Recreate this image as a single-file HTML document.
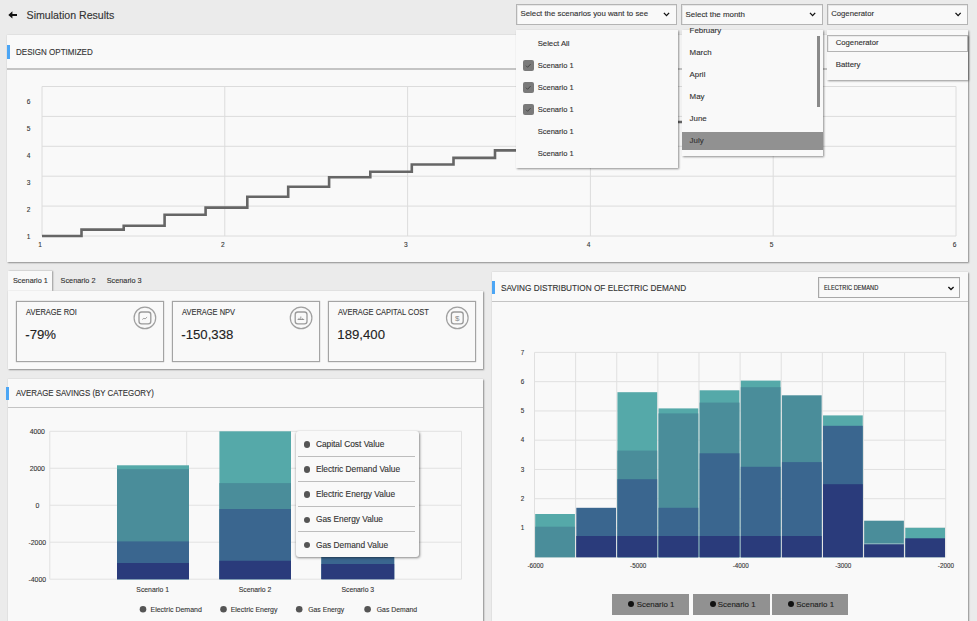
<!DOCTYPE html><html><head><meta charset="utf-8"><style>
*{margin:0;padding:0;box-sizing:border-box}
html,body{width:977px;height:621px;overflow:hidden;background:#ebebeb;font-family:"Liberation Sans",sans-serif;color:#333}
.t{position:absolute;white-space:nowrap;-webkit-text-stroke:0.12px currentColor}
svg text{stroke:currentColor;stroke-width:0.1px}
.card{position:absolute;background:#f9f9f9;box-shadow:1px 1px 1.5px rgba(0,0,0,.38)}
svg{position:absolute;left:0;top:0}
</style></head><body>
<svg width="977" height="621" font-family="Liberation Sans" style="z-index:1"><path d="M8.3 14.9 L12.4 11.2 L12.4 13.9 H17 V15.9 H12.4 V18.6 Z" fill="#111"/></svg>
<div class="t" style="left:26.6px;top:7.0px;font-size:10.6px;line-height:16px;color:#333;">Simulation Results</div>
<div style="position:absolute;left:7px;top:35px;width:961px;height:227px;background:#f9f9f9;box-shadow:1px 1px 1.5px rgba(0,0,0,.38),0 0 1.5px rgba(0,0,0,.12)"></div>
<div style="position:absolute;left:7px;top:45px;width:3px;height:13.600000000000001px;background:#4ca6f5"></div>
<div class="t" style="left:16.3px;top:45.0px;font-size:8.6px;line-height:14px;color:#333;transform:scaleX(0.9346);transform-origin:0 50%;">DESIGN OPTIMIZED</div>
<div style="position:absolute;left:7px;top:68px;width:961px;height:1.5px;background:#c4c4c4"></div>
<div style="position:absolute;left:8px;top:271.2px;width:44px;height:19.80000000000001px;background:#f9f9f9;box-shadow:1px 0 1.5px rgba(0,0,0,.35)"></div>
<div class="t" style="left:13.0px;top:275.2px;font-size:7.3px;line-height:12px;color:#333;">Scenario 1</div>
<div class="t" style="left:60.6px;top:275.2px;font-size:7.3px;line-height:12px;color:#333;">Scenario 2</div>
<div class="t" style="left:106.7px;top:275.2px;font-size:7.3px;line-height:12px;color:#333;">Scenario 3</div>
<div style="position:absolute;left:7.5px;top:291px;width:475.5px;height:78.19999999999999px;background:#f9f9f9;box-shadow:1px 1px 1.5px rgba(0,0,0,.38),0 0 1.5px rgba(0,0,0,.12)"></div>
<div style="position:absolute;left:16px;top:301.3px;width:147.7px;height:60.39999999999998px;border:1px solid #a4a4a4;box-shadow:0 0 1px rgba(0,0,0,.35)"></div>
<div class="t" style="left:25.5px;top:305.8px;font-size:8.5px;line-height:13px;color:#333;transform:scaleX(0.8788);transform-origin:0 50%;">AVERAGE ROI</div>
<div class="t" style="left:25.3px;top:325.0px;font-size:13.2px;line-height:20px;color:#222;">-79%</div>
<div style="position:absolute;left:172px;top:301.3px;width:147.7px;height:60.39999999999998px;border:1px solid #a4a4a4;box-shadow:0 0 1px rgba(0,0,0,.35)"></div>
<div class="t" style="left:181.5px;top:305.8px;font-size:8.5px;line-height:13px;color:#333;transform:scaleX(0.8788);transform-origin:0 50%;">AVERAGE NPV</div>
<div class="t" style="left:181.3px;top:325.0px;font-size:13.2px;line-height:20px;color:#222;">-150,338</div>
<div style="position:absolute;left:328px;top:301.3px;width:147.7px;height:60.39999999999998px;border:1px solid #a4a4a4;box-shadow:0 0 1px rgba(0,0,0,.35)"></div>
<div class="t" style="left:337.5px;top:305.8px;font-size:8.5px;line-height:13px;color:#333;transform:scaleX(0.8788);transform-origin:0 50%;">AVERAGE CAPITAL COST</div>
<div class="t" style="left:337.3px;top:325.0px;font-size:13.2px;line-height:20px;color:#222;">189,400</div>
<div style="position:absolute;left:8px;top:379px;width:475px;height:261px;background:#f9f9f9;box-shadow:1px 1px 1.5px rgba(0,0,0,.38),0 0 1.5px rgba(0,0,0,.12)"></div>
<div style="position:absolute;left:6px;top:387px;width:3px;height:13px;background:#4ca6f5"></div>
<div class="t" style="left:16.4px;top:386.3px;font-size:8.6px;line-height:14px;color:#333;transform:scaleX(0.9179);transform-origin:0 50%;">AVERAGE SAVINGS (BY CATEGORY)</div>
<div style="position:absolute;left:8px;top:406.5px;width:475px;height:1.5px;background:#c4c4c4"></div>
<div style="position:absolute;left:492px;top:271.5px;width:476px;height:368.5px;background:#f9f9f9;box-shadow:1px 1px 1.5px rgba(0,0,0,.38),0 0 1.5px rgba(0,0,0,.12)"></div>
<div style="position:absolute;left:492px;top:281px;width:3px;height:13px;background:#4ca6f5"></div>
<div class="t" style="left:501.2px;top:281.0px;font-size:8.6px;line-height:14px;color:#333;transform:scaleX(0.9559);transform-origin:0 50%;">SAVING DISTRIBUTION OF ELECTRIC DEMAND</div>
<div style="position:absolute;left:492px;top:300.8px;width:476px;height:1.3999999999999773px;background:#c4c4c4"></div>
<div style="position:absolute;left:818px;top:277.3px;width:142px;height:21.19999999999999px;border:1px solid #a8a8a8;background:#f9f9f9;box-shadow:inset 1px 1px 0 rgba(0,0,0,.06)"></div>
<div class="t" style="left:823.6px;top:283.2px;font-size:6.4px;line-height:10px;color:#222;transform:scaleX(0.8880);transform-origin:0 50%;">ELECTRIC DEMAND</div>
<svg width="977" height="621" font-family="Liberation Sans" style="z-index:1"><path d="M948.4 286.9 l2.6 2.6 l2.6 -2.6" stroke="#111" stroke-width="1.35" fill="none"/></svg>
<svg width="977" height="621" font-family="Liberation Sans" style="z-index:2"><circle cx="144.9" cy="317.9" r="10.8" fill="none" stroke="#a0a0a0" stroke-width="1.2"/><rect x="139.0" y="312.0" width="11.8" height="11.8" rx="2.6" fill="none" stroke="#9a9a9a" stroke-width="1.3"/><circle cx="301.1" cy="317.9" r="10.8" fill="none" stroke="#a0a0a0" stroke-width="1.2"/><rect x="295.20000000000005" y="312.0" width="11.8" height="11.8" rx="2.6" fill="none" stroke="#9a9a9a" stroke-width="1.3"/><circle cx="457.29999999999995" cy="317.9" r="10.8" fill="none" stroke="#a0a0a0" stroke-width="1.2"/><rect x="451.4" y="312.0" width="11.8" height="11.8" rx="2.6" fill="none" stroke="#9a9a9a" stroke-width="1.3"/><path d="M142.3 319.5 l1.6 -1.2 l1.2 0.6 l2 -1.8" stroke="#777" stroke-width="0.7" fill="none"/><path d="M297.6 319.5 h6.6 M299 319.5 v-1.6 M300.8 319.5 v-3 M302.6 319.5 v-1.2" stroke="#777" stroke-width="0.7" fill="none"/><text x="457.3" y="320.8" font-size="8" text-anchor="middle" fill="#8a8a8a" style="stroke:none" font-family="Liberation Sans">$</text><line x1="42" y1="86.5" x2="956" y2="86.5" stroke="#dcdcdc" stroke-width="1"/><line x1="42" y1="116.4" x2="956" y2="116.4" stroke="#dcdcdc" stroke-width="1"/><line x1="42" y1="146.3" x2="956" y2="146.3" stroke="#dcdcdc" stroke-width="1"/><line x1="42" y1="176.2" x2="956" y2="176.2" stroke="#dcdcdc" stroke-width="1"/><line x1="42" y1="206.1" x2="956" y2="206.1" stroke="#dcdcdc" stroke-width="1"/><line x1="42" y1="236.0" x2="956" y2="236.0" stroke="#dcdcdc" stroke-width="1"/><line x1="42.0" y1="86.5" x2="42.0" y2="236" stroke="#dcdcdc" stroke-width="1"/><line x1="224.8" y1="86.5" x2="224.8" y2="236" stroke="#dcdcdc" stroke-width="1"/><line x1="407.6" y1="86.5" x2="407.6" y2="236" stroke="#dcdcdc" stroke-width="1"/><line x1="590.4000000000001" y1="86.5" x2="590.4000000000001" y2="236" stroke="#dcdcdc" stroke-width="1"/><line x1="773.2" y1="86.5" x2="773.2" y2="236" stroke="#dcdcdc" stroke-width="1"/><line x1="956.0" y1="86.5" x2="956.0" y2="236" stroke="#dcdcdc" stroke-width="1"/><text x="28.5" y="104.2" font-size="6.6" text-anchor="middle" fill="#333">6</text><text x="28.5" y="131.10000000000002" font-size="6.6" text-anchor="middle" fill="#333">5</text><text x="28.5" y="158.0" font-size="6.6" text-anchor="middle" fill="#333">4</text><text x="28.5" y="184.9" font-size="6.6" text-anchor="middle" fill="#333">3</text><text x="28.5" y="211.8" font-size="6.6" text-anchor="middle" fill="#333">2</text><text x="28.5" y="238.70000000000002" font-size="6.6" text-anchor="middle" fill="#333">1</text><text x="40.0" y="246.8" font-size="6.6" text-anchor="middle" fill="#333">1</text><text x="222.9" y="246.8" font-size="6.6" text-anchor="middle" fill="#333">2</text><text x="405.8" y="246.8" font-size="6.6" text-anchor="middle" fill="#333">3</text><text x="588.7" y="246.8" font-size="6.6" text-anchor="middle" fill="#333">4</text><text x="771.6" y="246.8" font-size="6.6" text-anchor="middle" fill="#333">5</text><text x="954.5" y="246.8" font-size="6.6" text-anchor="middle" fill="#333">6</text><path d="M42 236 H81.5 V229.6 H123.7 V225.7 H164.6 V214.7 H205.6 V207.6 H247.3 V196.8 H288.2 V186.8 H329.1 V177.3 H370.3 V171.7 H411.8 V164.5 H453.5 V157.9 H495 V150.4 H536.5 V143 H578 V136 H619.5 V129 H661 V122 H702" stroke="#666" stroke-width="2.6" fill="none"/><line x1="49.8" y1="431.3" x2="461.5" y2="431.3" stroke="#e2e2e2" stroke-width="1"/><line x1="49.8" y1="468.27500000000003" x2="461.5" y2="468.27500000000003" stroke="#e2e2e2" stroke-width="1"/><line x1="49.8" y1="505.25" x2="461.5" y2="505.25" stroke="#e2e2e2" stroke-width="1"/><line x1="49.8" y1="542.225" x2="461.5" y2="542.225" stroke="#e2e2e2" stroke-width="1"/><line x1="49.8" y1="579.2" x2="461.5" y2="579.2" stroke="#e2e2e2" stroke-width="1"/><line x1="49.8" y1="431.3" x2="49.8" y2="579.2" stroke="#e2e2e2" stroke-width="1"/><line x1="186.7" y1="431.3" x2="186.7" y2="579.2" stroke="#e2e2e2" stroke-width="1"/><line x1="323.9" y1="431.3" x2="323.9" y2="579.2" stroke="#e2e2e2" stroke-width="1"/><line x1="461.5" y1="431.3" x2="461.5" y2="579.2" stroke="#e2e2e2" stroke-width="1"/><text x="37.3" y="433.6" font-size="6.9" text-anchor="middle" fill="#333">4000</text><text x="37.3" y="470.57500000000005" font-size="6.9" text-anchor="middle" fill="#333">2000</text><text x="37.3" y="507.55" font-size="6.9" text-anchor="middle" fill="#333">0</text><text x="37.3" y="544.525" font-size="6.9" text-anchor="middle" fill="#333">-2000</text><text x="37.3" y="581.5" font-size="6.9" text-anchor="middle" fill="#333">-4000</text><rect x="117" y="465.3" width="72" height="113.90000000000003" fill="#55a9a9"/><rect x="117" y="469.2" width="72" height="110.00000000000006" fill="#4a8d9a"/><rect x="117" y="541.4" width="72" height="37.80000000000007" fill="#3a668f"/><rect x="117" y="563" width="72" height="16.200000000000045" fill="#2a3b7b"/><rect x="219.4" y="431.3" width="71.6" height="147.90000000000003" fill="#55a9a9"/><rect x="219.4" y="483.1" width="71.6" height="96.10000000000002" fill="#4a8d9a"/><rect x="219.4" y="509" width="71.6" height="70.20000000000005" fill="#3a668f"/><rect x="219.4" y="560.8" width="71.6" height="18.40000000000009" fill="#2a3b7b"/><rect x="321.4" y="520" width="72.80000000000001" height="59.200000000000045" fill="#4a8d9a"/><rect x="321.4" y="540" width="72.80000000000001" height="39.200000000000045" fill="#3a668f"/><rect x="321.4" y="564" width="72.80000000000001" height="15.200000000000045" fill="#2a3b7b"/><text x="152.7" y="591.6999999999999" font-size="6.85" text-anchor="middle" fill="#333">Scenario 1</text><text x="255" y="591.6999999999999" font-size="6.85" text-anchor="middle" fill="#333">Scenario 2</text><text x="357.8" y="591.6999999999999" font-size="6.85" text-anchor="middle" fill="#333">Scenario 3</text><circle cx="143" cy="609.2" r="3.3" fill="#555"/><text x="150.5" y="612.1" font-size="7.0" fill="#333">Electric Demand</text><circle cx="223.5" cy="609.2" r="3.3" fill="#555"/><text x="230.7" y="612.1" font-size="6.96" fill="#333">Electric Energy</text><circle cx="299.2" cy="609.2" r="3.3" fill="#555"/><text x="308.3" y="612.1" font-size="6.8" fill="#333">Gas Energy</text><circle cx="367.6" cy="609.2" r="3.3" fill="#555"/><text x="376.8" y="612.1" font-size="6.85" fill="#333">Gas Demand</text><line x1="534.5" y1="352.4" x2="945.7" y2="352.4" stroke="#e0e0e0" stroke-width="1"/><line x1="534.5" y1="381.65999999999997" x2="945.7" y2="381.65999999999997" stroke="#e0e0e0" stroke-width="1"/><line x1="534.5" y1="410.91999999999996" x2="945.7" y2="410.91999999999996" stroke="#e0e0e0" stroke-width="1"/><line x1="534.5" y1="440.17999999999995" x2="945.7" y2="440.17999999999995" stroke="#e0e0e0" stroke-width="1"/><line x1="534.5" y1="469.44" x2="945.7" y2="469.44" stroke="#e0e0e0" stroke-width="1"/><line x1="534.5" y1="498.7" x2="945.7" y2="498.7" stroke="#e0e0e0" stroke-width="1"/><line x1="534.5" y1="527.96" x2="945.7" y2="527.96" stroke="#e0e0e0" stroke-width="1"/><line x1="534.5" y1="557.22" x2="945.7" y2="557.22" stroke="#e0e0e0" stroke-width="1"/><line x1="534.5" y1="352.4" x2="534.5" y2="557.2" stroke="#e0e0e0" stroke-width="1"/><line x1="575.62" y1="352.4" x2="575.62" y2="557.2" stroke="#e0e0e0" stroke-width="1"/><line x1="616.74" y1="352.4" x2="616.74" y2="557.2" stroke="#e0e0e0" stroke-width="1"/><line x1="657.86" y1="352.4" x2="657.86" y2="557.2" stroke="#e0e0e0" stroke-width="1"/><line x1="698.98" y1="352.4" x2="698.98" y2="557.2" stroke="#e0e0e0" stroke-width="1"/><line x1="740.1" y1="352.4" x2="740.1" y2="557.2" stroke="#e0e0e0" stroke-width="1"/><line x1="781.22" y1="352.4" x2="781.22" y2="557.2" stroke="#e0e0e0" stroke-width="1"/><line x1="822.3399999999999" y1="352.4" x2="822.3399999999999" y2="557.2" stroke="#e0e0e0" stroke-width="1"/><line x1="863.46" y1="352.4" x2="863.46" y2="557.2" stroke="#e0e0e0" stroke-width="1"/><line x1="904.5799999999999" y1="352.4" x2="904.5799999999999" y2="557.2" stroke="#e0e0e0" stroke-width="1"/><line x1="945.7" y1="352.4" x2="945.7" y2="557.2" stroke="#e0e0e0" stroke-width="1"/><text x="522.6" y="354.59999999999997" font-size="6.3" text-anchor="middle" fill="#333">7</text><text x="522.6" y="383.85999999999996" font-size="6.3" text-anchor="middle" fill="#333">6</text><text x="522.6" y="413.11999999999995" font-size="6.3" text-anchor="middle" fill="#333">5</text><text x="522.6" y="442.37999999999994" font-size="6.3" text-anchor="middle" fill="#333">4</text><text x="522.6" y="471.64" font-size="6.3" text-anchor="middle" fill="#333">3</text><text x="522.6" y="500.9" font-size="6.3" text-anchor="middle" fill="#333">2</text><text x="522.6" y="530.1600000000001" font-size="6.3" text-anchor="middle" fill="#333">1</text><text x="535.5" y="568.2" font-size="6.3" text-anchor="middle" fill="#333">-6000</text><text x="638.1" y="568.2" font-size="6.3" text-anchor="middle" fill="#333">-5000</text><text x="740.7" y="568.2" font-size="6.3" text-anchor="middle" fill="#333">-4000</text><text x="843.3" y="568.2" font-size="6.3" text-anchor="middle" fill="#333">-3000</text><text x="945.9" y="568.2" font-size="6.3" text-anchor="middle" fill="#333">-2000</text><rect x="535.2" y="514" width="39.719999999999914" height="43.200000000000045" fill="#55a9a9"/><rect x="535.2" y="526.7" width="39.719999999999914" height="30.5" fill="#4a8d9a"/><rect x="576.32" y="507.8" width="39.719999999999914" height="49.400000000000034" fill="#3a668f"/><rect x="576.32" y="536" width="39.719999999999914" height="21.200000000000045" fill="#2a3b7b"/><rect x="617.44" y="392.2" width="39.719999999999914" height="165.00000000000006" fill="#55a9a9"/><rect x="617.44" y="450.6" width="39.719999999999914" height="106.60000000000002" fill="#4a8d9a"/><rect x="617.44" y="479.2" width="39.719999999999914" height="78.00000000000006" fill="#3a668f"/><rect x="617.44" y="536" width="39.719999999999914" height="21.200000000000045" fill="#2a3b7b"/><rect x="658.56" y="408.4" width="39.72000000000003" height="148.80000000000007" fill="#55a9a9"/><rect x="658.56" y="413.4" width="39.72000000000003" height="143.80000000000007" fill="#4a8d9a"/><rect x="658.56" y="507.8" width="39.72000000000003" height="49.400000000000034" fill="#3a668f"/><rect x="658.56" y="536" width="39.72000000000003" height="21.200000000000045" fill="#2a3b7b"/><rect x="699.68" y="390.3" width="39.72000000000003" height="166.90000000000003" fill="#55a9a9"/><rect x="699.68" y="402.6" width="39.72000000000003" height="154.60000000000002" fill="#4a8d9a"/><rect x="699.68" y="453.3" width="39.72000000000003" height="103.90000000000003" fill="#3a668f"/><rect x="699.68" y="536" width="39.72000000000003" height="21.200000000000045" fill="#2a3b7b"/><rect x="740.8" y="380.6" width="39.72000000000003" height="176.60000000000002" fill="#55a9a9"/><rect x="740.8" y="387.2" width="39.72000000000003" height="170.00000000000006" fill="#4a8d9a"/><rect x="740.8" y="466.8" width="39.72000000000003" height="90.40000000000003" fill="#3a668f"/><rect x="740.8" y="536" width="39.72000000000003" height="21.200000000000045" fill="#2a3b7b"/><rect x="781.92" y="395.3" width="39.72000000000003" height="161.90000000000003" fill="#4a8d9a"/><rect x="781.92" y="462.1" width="39.72000000000003" height="95.10000000000002" fill="#3a668f"/><rect x="781.92" y="536" width="39.72000000000003" height="21.200000000000045" fill="#2a3b7b"/><rect x="823.04" y="415.4" width="39.72000000000003" height="141.80000000000007" fill="#55a9a9"/><rect x="823.04" y="425.8" width="39.72000000000003" height="131.40000000000003" fill="#3a668f"/><rect x="823.04" y="484.2" width="39.72000000000003" height="73.00000000000006" fill="#2a3b7b"/><rect x="864.16" y="520.7" width="39.72000000000003" height="36.5" fill="#4a8d9a"/><rect x="864.16" y="543.2" width="39.72000000000003" height="14.0" fill="#8fb9c0"/><rect x="864.16" y="544.3" width="39.72000000000003" height="12.900000000000091" fill="#2a3b7b"/><rect x="905.28" y="527.8" width="39.72000000000003" height="29.40000000000009" fill="#55a9a9"/><rect x="905.28" y="538.3" width="39.72000000000003" height="18.90000000000009" fill="#2a3b7b"/></svg>
<div style="position:absolute;z-index:3;left:612.1px;top:593.8px;width:76.89999999999998px;height:21.2px;background:#919191"></div>
<div style="position:absolute;z-index:3;left:628.4px;top:601.4px;width:6px;height:6px;border-radius:50%;background:#111"></div>
<div class="t" style="left:636.7px;top:597.9px;font-size:7.9px;line-height:13px;color:#222;z-index:3;">Scenario 1</div>
<div style="position:absolute;z-index:3;left:693.2px;top:593.8px;width:76.5px;height:21.2px;background:#919191"></div>
<div style="position:absolute;z-index:3;left:709.5px;top:601.4px;width:6px;height:6px;border-radius:50%;background:#111"></div>
<div class="t" style="left:717.8px;top:597.9px;font-size:7.9px;line-height:13px;color:#222;z-index:3;">Scenario 1</div>
<div style="position:absolute;z-index:3;left:771.7px;top:593.8px;width:76.79999999999995px;height:21.2px;background:#919191"></div>
<div style="position:absolute;z-index:3;left:788.0px;top:601.4px;width:6px;height:6px;border-radius:50%;background:#111"></div>
<div class="t" style="left:796.3px;top:597.9px;font-size:7.9px;line-height:13px;color:#222;z-index:3;">Scenario 1</div>
<div style="position:absolute;z-index:4;left:295.5px;top:431.3px;width:123px;height:126.2px;background:#f9f9f9;border-radius:3px;box-shadow:0.5px 1px 2.5px rgba(0,0,0,.45)"></div>
<div style="position:absolute;z-index:4;left:303.6px;top:441.0px;width:6.6px;height:6.6px;border-radius:50%;background:#555"></div>
<div class="t" style="left:315.9px;top:437.8px;font-size:8.35px;line-height:13px;color:#333;z-index:4;">Capital Cost Value</div>
<div style="position:absolute;z-index:4;left:298px;top:455.5px;width:117px;height:1px;background:#bdbdbd"></div>
<div style="position:absolute;z-index:4;left:303.6px;top:466.2px;width:6.6px;height:6.6px;border-radius:50%;background:#555"></div>
<div class="t" style="left:315.9px;top:463.0px;font-size:8.35px;line-height:13px;color:#333;z-index:4;">Electric Demand Value</div>
<div style="position:absolute;z-index:4;left:298px;top:480.7px;width:117px;height:1px;background:#bdbdbd"></div>
<div style="position:absolute;z-index:4;left:303.6px;top:491.4px;width:6.6px;height:6.6px;border-radius:50%;background:#555"></div>
<div class="t" style="left:315.9px;top:488.2px;font-size:8.35px;line-height:13px;color:#333;z-index:4;">Electric Energy Value</div>
<div style="position:absolute;z-index:4;left:298px;top:505.9px;width:117px;height:1px;background:#bdbdbd"></div>
<div style="position:absolute;z-index:4;left:303.6px;top:516.6px;width:6.6px;height:6.6px;border-radius:50%;background:#555"></div>
<div class="t" style="left:315.9px;top:513.4px;font-size:8.35px;line-height:13px;color:#333;z-index:4;">Gas Energy Value</div>
<div style="position:absolute;z-index:4;left:298px;top:531.1px;width:117px;height:1px;background:#bdbdbd"></div>
<div style="position:absolute;z-index:4;left:303.6px;top:541.8000000000001px;width:6.6px;height:6.6px;border-radius:50%;background:#555"></div>
<div class="t" style="left:315.9px;top:538.6px;font-size:8.35px;line-height:13px;color:#333;z-index:4;">Gas Demand Value</div>
<div style="position:absolute;z-index:5;left:516.3px;top:4px;width:161.20000000000005px;height:20.8px;background:#f9f9f9;border:1px solid #b4b4b4;box-shadow:inset 1px 1px 0 rgba(0,0,0,.07)"></div>
<div class="t" style="left:520.5px;top:8.4px;font-size:7.83px;line-height:12px;color:#333;z-index:5;">Select the scenarios you want to see</div>
<svg width="977" height="621" font-family="Liberation Sans" style="z-index:5"><path d="M663.9000000000001 12.9 l2.6 2.7 l2.6 -2.7" stroke="#111" stroke-width="1.35" fill="none"/></svg>
<div style="position:absolute;z-index:5;left:681.4px;top:4px;width:142.0px;height:20.8px;background:#f9f9f9;border:1px solid #b4b4b4;box-shadow:inset 1px 1px 0 rgba(0,0,0,.07)"></div>
<div class="t" style="left:685.6px;top:7.9px;font-size:7.92px;line-height:13px;color:#333;z-index:5;">Select the month</div>
<svg width="977" height="621" font-family="Liberation Sans" style="z-index:5"><path d="M810.0 12.9 l2.6 2.7 l2.6 -2.7" stroke="#111" stroke-width="1.35" fill="none"/></svg>
<div style="position:absolute;z-index:5;left:827px;top:4px;width:140.79999999999995px;height:20.8px;background:#f9f9f9;border:1px solid #b4b4b4;box-shadow:inset 1px 1px 0 rgba(0,0,0,.07)"></div>
<div class="t" style="left:831.2px;top:8.4px;font-size:7.73px;line-height:12px;color:#333;z-index:5;">Cogenerator</div>
<svg width="977" height="621" font-family="Liberation Sans" style="z-index:5"><path d="M955.5 12.9 l2.6 2.7 l2.6 -2.7" stroke="#111" stroke-width="1.35" fill="none"/></svg>
<div style="position:absolute;z-index:6;left:516.4px;top:29.7px;width:161.2px;height:138px;background:#f9f9f9;box-shadow:1px 1px 2px rgba(0,0,0,.42)"></div>
<div class="t" style="left:537.7px;top:37.8px;font-size:7.74px;line-height:12px;color:#333;z-index:6;">Select All</div>
<div style="position:absolute;z-index:6;left:523px;top:60.3px;width:10.5px;height:10.5px;border-radius:2px;background:#7a7a7a"></div>
<svg width="977" height="621" font-family="Liberation Sans" style="z-index:6"><path d="M526 65.7 l1.6 1.6 l3 -3.2" stroke="#3a3a3a" stroke-width="0.8" fill="none"/></svg>
<div class="t" style="left:537.7px;top:59.5px;font-size:7.53px;line-height:12px;color:#333;z-index:6;">Scenario 1</div>
<div style="position:absolute;z-index:6;left:523px;top:82.3px;width:10.5px;height:10.5px;border-radius:2px;background:#7a7a7a"></div>
<svg width="977" height="621" font-family="Liberation Sans" style="z-index:6"><path d="M526 87.7 l1.6 1.6 l3 -3.2" stroke="#3a3a3a" stroke-width="0.8" fill="none"/></svg>
<div class="t" style="left:537.7px;top:81.5px;font-size:7.53px;line-height:12px;color:#333;z-index:6;">Scenario 1</div>
<div style="position:absolute;z-index:6;left:523px;top:104.3px;width:10.5px;height:10.5px;border-radius:2px;background:#7a7a7a"></div>
<svg width="977" height="621" font-family="Liberation Sans" style="z-index:6"><path d="M526 109.7 l1.6 1.6 l3 -3.2" stroke="#3a3a3a" stroke-width="0.8" fill="none"/></svg>
<div class="t" style="left:537.7px;top:103.5px;font-size:7.53px;line-height:12px;color:#333;z-index:6;">Scenario 1</div>
<div class="t" style="left:537.7px;top:125.5px;font-size:7.53px;line-height:12px;color:#333;z-index:6;">Scenario 1</div>
<div class="t" style="left:537.7px;top:147.5px;font-size:7.53px;line-height:12px;color:#333;z-index:6;">Scenario 1</div>
<div style="position:absolute;z-index:6;left:681.6px;top:29.8px;width:141.8px;height:126.2px;background:#f9f9f9;box-shadow:1px 1px 2px rgba(0,0,0,.42)">
<div style="position:absolute;left:0;top:102.2px;width:141.8px;height:18px;background:#919191"></div>
<div style="position:absolute;left:135px;top:6.2px;width:3.2px;height:70.6px;background:#8a8a8a"></div>
<div class="t" style="left:8px;top:-5.8px;font-size:7.9px;line-height:14px;color:#333">February</div>
<div class="t" style="left:8px;top:16.3px;font-size:7.9px;line-height:14px;color:#333">March</div>
<div class="t" style="left:8px;top:38.4px;font-size:7.9px;line-height:14px;color:#333">April</div>
<div class="t" style="left:8px;top:60.5px;font-size:7.9px;line-height:14px;color:#333">May</div>
<div class="t" style="left:8px;top:82.6px;font-size:7.9px;line-height:14px;color:#333">June</div>
<div class="t" style="left:8px;top:104.7px;font-size:7.9px;line-height:14px;color:#333">July</div>
</div>
<div style="position:absolute;z-index:6;left:826.5px;top:30.3px;width:141.5px;height:49.7px;background:#f9f9f9;box-shadow:1px 1px 2px rgba(0,0,0,.42)"></div>
<div style="position:absolute;z-index:6;left:827.3px;top:34.5px;width:140.5px;height:17.8px;border:1px solid #b4b4b4;box-shadow:inset 1px 1px 0 rgba(0,0,0,.06)"></div>
<div class="t" style="left:835.7px;top:36.6px;font-size:7.73px;line-height:12px;color:#333;z-index:6;">Cogenerator</div>
<div class="t" style="left:835.7px;top:58.9px;font-size:7.85px;line-height:12px;color:#333;z-index:6;">Battery</div>
</body></html>
